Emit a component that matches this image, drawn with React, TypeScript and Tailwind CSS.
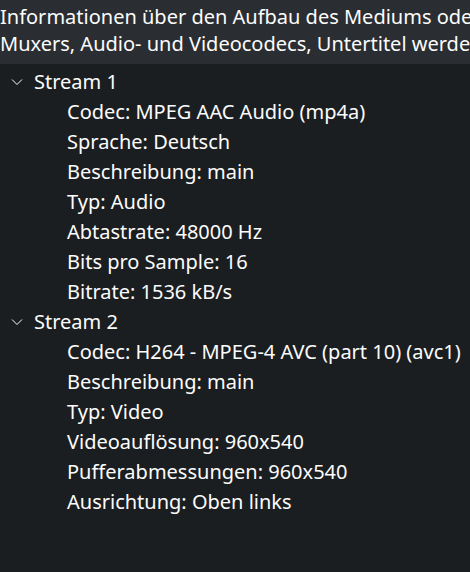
import React from "react";

const streams = [
  {
    name: "Stream 1",
    items: [
      "Codec: MPEG AAC Audio (mp4a)",
      "Sprache: Deutsch",
      "Beschreibung: main",
      "Typ: Audio",
      "Abtastrate: 48000 Hz",
      "Bits pro Sample: 16",
      "Bitrate: 1536 kB/s",
    ],
  },
  {
    name: "Stream 2",
    items: [
      "Codec: H264 - MPEG-4 AVC (part 10) (avc1)",
      "Beschreibung: main",
      "Typ: Video",
      "Videoauflösung: 960x540",
      "Pufferabmessungen: 960x540",
      "Ausrichtung: Oben links",
    ],
  },
];

function Chevron() {
  return (
    <svg width="12" height="8" viewBox="0 0 12 8" className="shrink-0">
      <path d="M1 1.5 L6 6.5 L11 1.5" fill="none" stroke="#fcfcfc" strokeWidth="1" />
    </svg>
  );
}

export default function App() {
  return (
    <div
      className="w-[470px] h-[572px] overflow-hidden bg-[#1b1e20] text-[#fcfcfc] text-[20px]"
      style={{ fontFamily: '"Noto Sans", sans-serif' }}
    >
      <div className="h-[64px] bg-[#2a2e32] pl-[0px] pt-[3px] leading-[27px] whitespace-nowrap overflow-hidden">
        <div>Informationen über den Aufbau des Mediums oder</div>
        <div>Muxers, Audio- und Videocodecs, Untertitel werden</div>
      </div>
      <div className="pt-[3px]">
        {streams.map((s) => (
          <div key={s.name}>
            <div className="h-[30px] flex items-center pl-[11px] gap-[11px]">
              <Chevron />
              <span>{s.name}</span>
            </div>
            {s.items.map((it) => (
              <div key={it} className="h-[30px] flex items-center pl-[67px] whitespace-nowrap">
                {it}
              </div>
            ))}
          </div>
        ))}
      </div>
    </div>
  );
}
